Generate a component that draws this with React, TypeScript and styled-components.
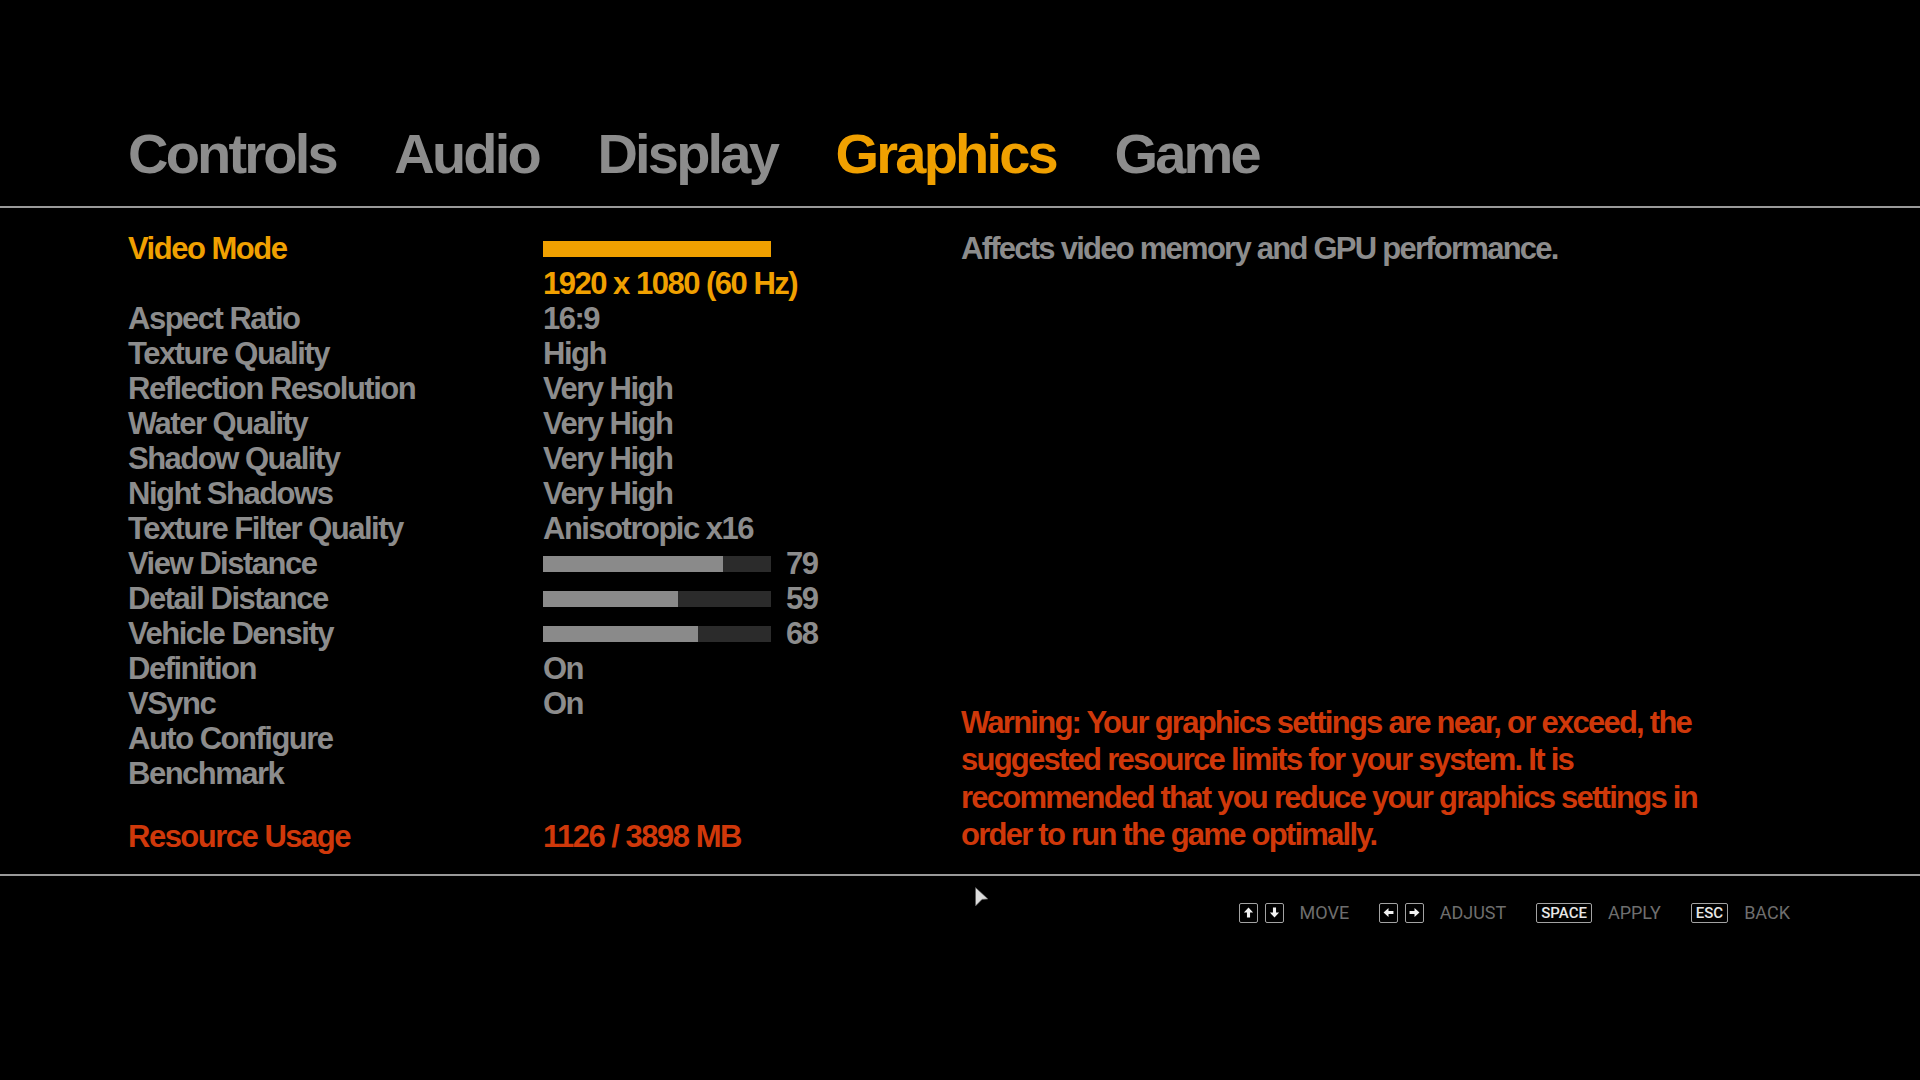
import React from 'react';
import styled, { createGlobalStyle } from 'styled-components';

const GlobalStyle = createGlobalStyle`
  html, body {
    margin: 0;
    padding: 0;
    background: #000;
  }
  body {
    font-family: "Liberation Sans", Arial, sans-serif;
  }
`;

const GRAY = '#8c8c8c';
const ORANGE = '#f0a000';
const RED = '#cf380a';

type Tone = 'normal' | 'active' | 'alert';

const toneColor = (t?: Tone) => (t === 'active' ? ORANGE : t === 'alert' ? RED : GRAY);

const Screen = styled.div`
  position: relative;
  width: 1920px;
  height: 1080px;
  background: #000;
  overflow: hidden;
  font-family: "Liberation Sans", Arial, sans-serif;
  font-weight: 700;
`;

const TabBar = styled.nav`
  display: flex;
  gap: 58.5px;
  height: 206px;
  box-sizing: border-box;
  padding: 126px 0 0 128px;
`;

const Tab = styled.div<{ $active?: boolean }>`
  font-size: 56px;
  line-height: 56px;
  letter-spacing: -2.8px;
  color: ${(p) => (p.$active ? ORANGE : GRAY)};
`;

const Rule = styled.div`
  height: 2px;
  background: #9a9a9a;
`;

const Content = styled.div`
  display: flex;
  padding: 22.5px 0 20.5px 128px;
`;

const SettingsList = styled.div`
  width: 833px;
  flex-shrink: 0;
`;

const Row = styled.div<{ $tone?: Tone; $gapTop?: boolean }>`
  display: grid;
  grid-template-columns: 415px 1fr;
  height: 35px;
  font-size: 31px;
  line-height: 35px;
  letter-spacing: -1.5px;
  white-space: nowrap;
  color: ${(p) => toneColor(p.$tone)};
  margin-top: ${(p) => (p.$gapTop ? '28px' : '0')};
`;

const Label = styled.div``;

const Value = styled.div`
  display: flex;
  align-items: flex-start;
`;

const Track = styled.div<{ $solid?: boolean }>`
  width: 228px;
  height: 16px;
  margin-top: 10.5px;
  background: ${(p) => (p.$solid ? ORANGE : '#2b2b2b')};
`;

const Fill = styled.div`
  height: 100%;
  background: #8a8a8a;
`;

const SliderNumber = styled.span`
  margin-left: 15px;
`;

const InfoPanel = styled.div`
  flex: 1;
  display: flex;
  flex-direction: column;
  justify-content: space-between;
  font-size: 31px;
  letter-spacing: -1.75px;
`;

const Description = styled.div`
  line-height: 35px;
  color: ${GRAY};
`;

const Warning = styled.div`
  line-height: 37.4px;
  color: ${RED};
  white-space: nowrap;

  span {
    display: block;
  }
`;

const Footer = styled.footer`
  display: flex;
  justify-content: flex-end;
  gap: 30px;
  padding: 26px 130px 0 0;
`;

const Hint = styled.div`
  display: flex;
  align-items: center;
  gap: 16px;
`;

const Keys = styled.div`
  display: flex;
  gap: 6.5px;
`;

const KeyCap = styled.span<{ $icon?: boolean }>`
  display: inline-flex;
  align-items: center;
  justify-content: center;
  box-sizing: border-box;
  height: 20px;
  width: ${(p) => (p.$icon ? '19px' : 'auto')};
  padding: ${(p) => (p.$icon ? '0' : '0 4px')};
  border: 1.5px solid #a3a3a3;
  border-radius: 2px;
  color: #e6e6e6;
  font-family: Roboto, "Liberation Sans", sans-serif;
  font-weight: 500;
  font-size: 15px;
  letter-spacing: 0;
`;

const HintLabel = styled.span`
  font-family: Roboto, "Liberation Sans", sans-serif;
  font-weight: 400;
  font-size: 18px;
  letter-spacing: 0;
  color: #6e6e6e;
`;

const Cursor = styled.svg`
  position: absolute;
  left: 975px;
  top: 887px;
`;

const ArrowKey: React.FC<{ dir: 'up' | 'down' | 'left' | 'right' }> = ({ dir }) => {
  const rot = { up: 0, right: 90, down: 180, left: 270 }[dir];
  return (
    <KeyCap $icon>
      <svg width="11" height="11" viewBox="0 0 10 10">
        <path d="M5 0.5 L9.2 5 H6.4 V9.5 H3.6 V5 H0.8 Z" fill="#f2f2f2" transform={`rotate(${rot} 5 5)`} />
      </svg>
    </KeyCap>
  );
};

type Setting = { label: string; value?: string; slider?: number };

const settings: Setting[] = [
  { label: 'Aspect Ratio', value: '16:9' },
  { label: 'Texture Quality', value: 'High' },
  { label: 'Reflection Resolution', value: 'Very High' },
  { label: 'Water Quality', value: 'Very High' },
  { label: 'Shadow Quality', value: 'Very High' },
  { label: 'Night Shadows', value: 'Very High' },
  { label: 'Texture Filter Quality', value: 'Anisotropic x16' },
  { label: 'View Distance', slider: 79 },
  { label: 'Detail Distance', slider: 59 },
  { label: 'Vehicle Density', slider: 68 },
  { label: 'Definition', value: 'On' },
  { label: 'VSync', value: 'On' },
  { label: 'Auto Configure' },
  { label: 'Benchmark' },
];

const tabs = ['Controls', 'Audio', 'Display', 'Graphics', 'Game'];

const App: React.FC = () => {
  return (
    <Screen>
      <GlobalStyle />
      <TabBar>
        {tabs.map((t) => (
          <Tab key={t} $active={t === 'Graphics'}>
            {t}
          </Tab>
        ))}
      </TabBar>
      <Rule />
      <Content>
        <SettingsList>
          <Row $tone="active">
            <Label>Video Mode</Label>
            <Value>
              <Track $solid />
            </Value>
          </Row>
          <Row $tone="active">
            <Label />
            <Value>1920 x 1080 (60 Hz)</Value>
          </Row>
          {settings.map((s) => (
            <Row key={s.label}>
              <Label>{s.label}</Label>
              <Value>
                {s.slider !== undefined ? (
                  <>
                    <Track>
                      <Fill style={{ width: `${s.slider}%` }} />
                    </Track>
                    <SliderNumber>{s.slider}</SliderNumber>
                  </>
                ) : (
                  s.value
                )}
              </Value>
            </Row>
          ))}
          <Row $tone="alert" $gapTop>
            <Label>Resource Usage</Label>
            <Value>1126 / 3898 MB</Value>
          </Row>
        </SettingsList>
        <InfoPanel>
          <Description>Affects video memory and GPU performance.</Description>
          <Warning>
            <span>Warning: Your graphics settings are near, or exceed, the</span>
            <span>suggested resource limits for your system. It is</span>
            <span>recommended that you reduce your graphics settings in</span>
            <span>order to run the game optimally.</span>
          </Warning>
        </InfoPanel>
      </Content>
      <Rule />
      <Footer>
        <Hint>
          <Keys>
            <ArrowKey dir="up" />
            <ArrowKey dir="down" />
          </Keys>
          <HintLabel>MOVE</HintLabel>
        </Hint>
        <Hint>
          <Keys>
            <ArrowKey dir="left" />
            <ArrowKey dir="right" />
          </Keys>
          <HintLabel>ADJUST</HintLabel>
        </Hint>
        <Hint>
          <KeyCap>SPACE</KeyCap>
          <HintLabel>APPLY</HintLabel>
        </Hint>
        <Hint>
          <KeyCap>ESC</KeyCap>
          <HintLabel>BACK</HintLabel>
        </Hint>
      </Footer>
      <Cursor width="14" height="20" viewBox="0 0 14 20">
        <polygon points="0.5,0.5 13,12 7,12.4 0.5,19" fill="#dcdcdc" stroke="#555" strokeWidth="0.6" />
      </Cursor>
    </Screen>
  );
};

export default App;
